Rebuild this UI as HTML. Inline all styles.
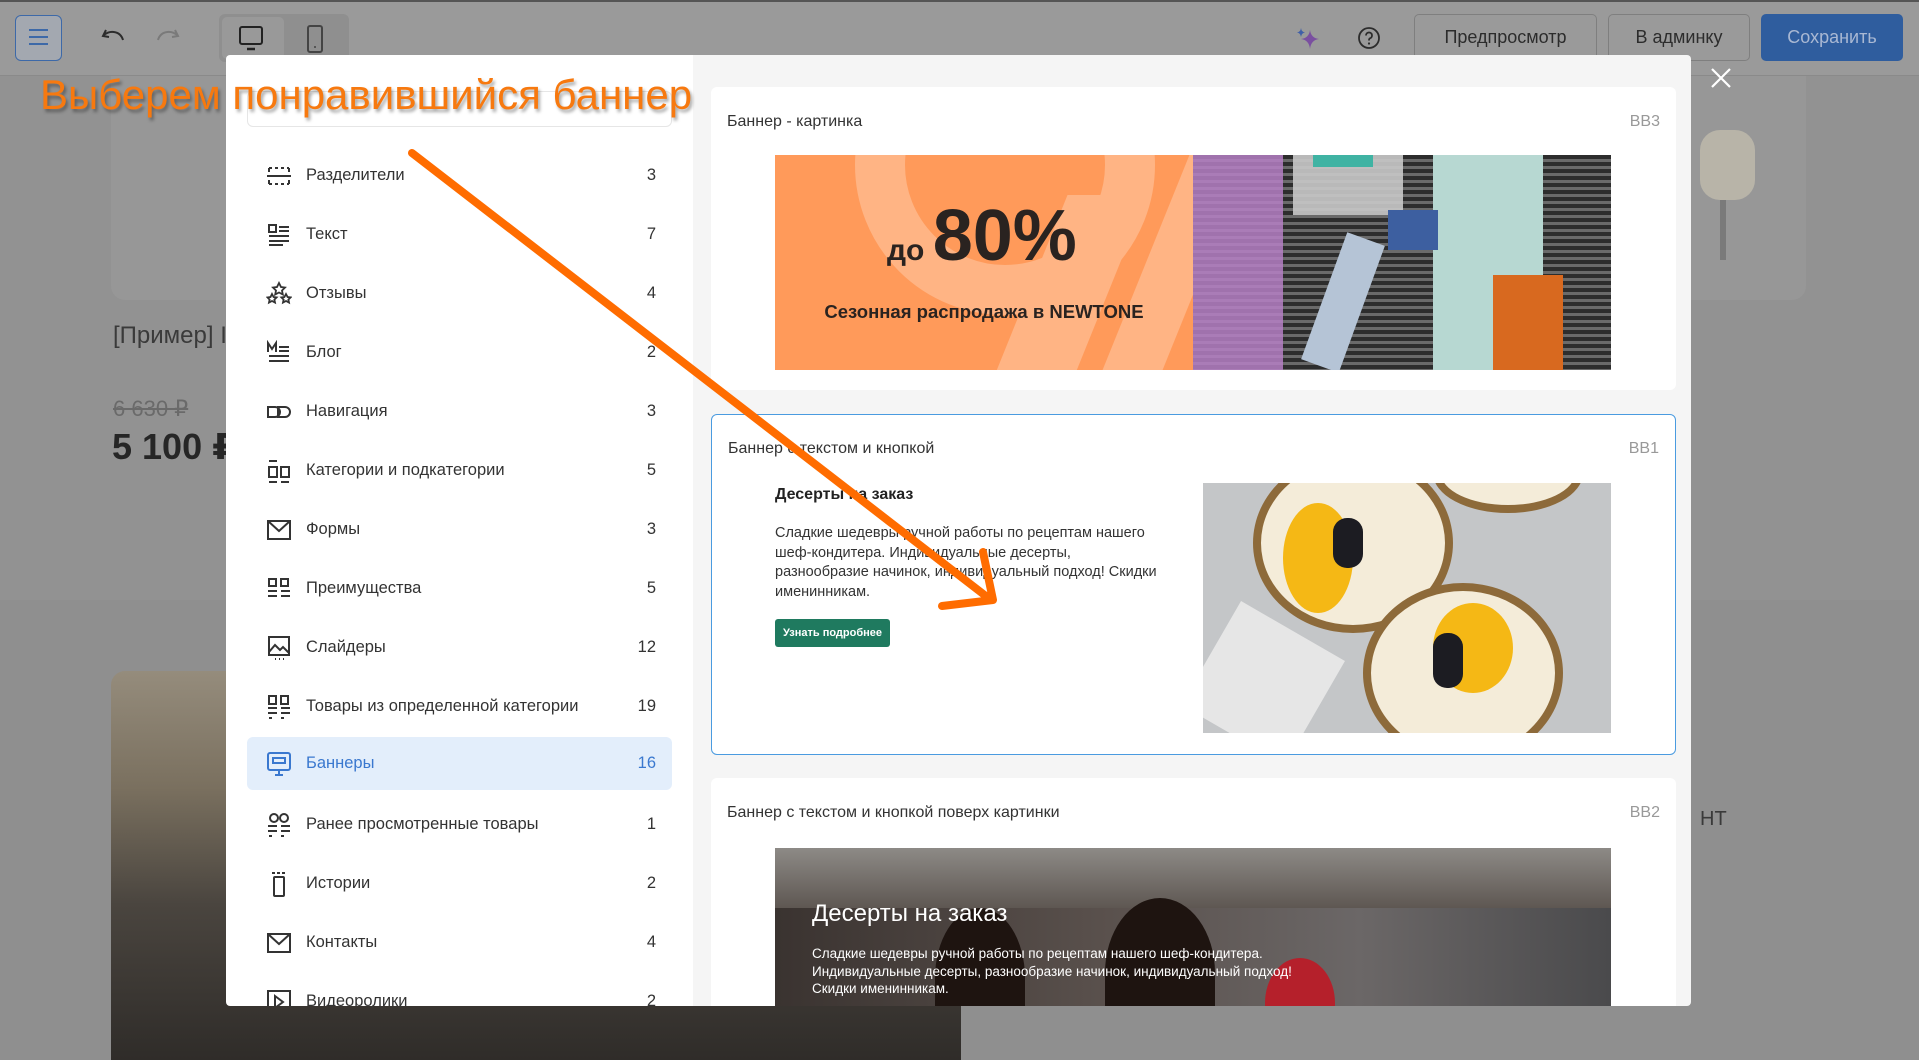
<!DOCTYPE html>
<html><head><meta charset="utf-8"><style>
*{margin:0;padding:0;box-sizing:border-box}
body{width:1919px;height:1060px;overflow:hidden;background:#929292;font-family:"Liberation Sans","DejaVu Sans",sans-serif;position:relative}
.a{position:absolute}
.tb{left:0;top:0;width:1919px;height:76px;background:#9a9a9a;border-top:2px solid #555;border-bottom:1px solid #8a8a8a}
.btn{border:1px solid #7f7f7f;border-radius:5px;color:#2c2c2c;font-size:18px;display:flex;align-items:center;justify-content:center}
.side{left:226px;top:55px;width:467px;height:951px;background:#fff;overflow:hidden;border-radius:4px 0 0 4px}
.right{left:693px;top:55px;width:998px;height:951px;background:#f5f5f5;overflow:hidden;border-radius:0 4px 4px 0}
.it{position:absolute;left:21px;width:425px;height:53px;display:flex;align-items:center;font-size:16.5px;color:#333;border-radius:6px}
.it svg{position:absolute;left:19px;width:26px;height:26px}
.it .t{position:absolute;left:59px}
.it .n{position:absolute;right:16px}
.card{position:absolute;left:18px;width:965px;background:#fff;border-radius:6px}
.ct{position:absolute;left:16px;top:26px;font-size:16px;color:#333}
.cc{position:absolute;right:16px;top:26px;font-size:16px;color:#999}
</style></head><body>
<div class="a" style="left:111px;top:76px;width:1695px;height:224px;background:#979797;border-radius:0 0 14px 14px"></div>
<div class="a" style="left:1690px;top:110px;width:80px;height:170px">
<div class="a" style="left:10px;top:20px;width:55px;height:70px;background:#b8b4a8;border-radius:20px"></div>
<div class="a" style="left:30px;top:90px;width:6px;height:60px;background:#7a7a7a"></div>
</div>
<div class="a" style="left:113px;top:322px;font-size:24px;color:#3a3a3a">[Пример] I</div>
<div class="a" style="left:113px;top:396px;font-size:22px;color:#6a6a6a;text-decoration:line-through">6 630 ₽</div>
<div class="a" style="left:112px;top:426px;font-size:36px;font-weight:bold;color:#262626">5 100 ₽</div>
<div class="a" style="left:0;top:600px;width:1919px;height:460px;background:#8f8f8f"></div>
<div class="a" style="left:111px;top:671px;width:850px;height:389px;border-radius:14px 0 0 0;background:linear-gradient(180deg,#958c7c 0%,#7a705f 30%,#4a453f 60%,#2f2c29 100%)"></div>
<div class="a" style="left:1700px;top:808px;font-size:20px;color:#3a3a3a">НТ</div>

<div class="a tb"></div>
<div class="a" style="left:15px;top:15px;width:47px;height:46px;border:1.5px solid #3d69a8;border-radius:6px;background:#a3a8b0"></div>
<div class="a" style="left:29px;top:29px;width:19px;height:2px;background:#3d69a8;box-shadow:0 7px 0 #3d69a8,0 14px 0 #3d69a8"></div>
<svg class="a" style="left:100px;top:26px" width="28" height="24" viewBox="0 0 28 24"><path d="M6 4 L3 10 L9 11 M3 10 C8 4 20 4 23 14" fill="none" stroke="#2c2c2c" stroke-width="2"/></svg>
<svg class="a" style="left:153px;top:26px" width="28" height="24" viewBox="0 0 28 24"><path d="M22 4 L25 10 L19 11 M25 10 C20 4 8 4 5 14" fill="none" stroke="#7a7a7a" stroke-width="2"/></svg>
<div class="a" style="left:219px;top:14px;width:130px;height:48px;background:#8f8f8f;border-radius:6px"></div>
<div class="a" style="left:222px;top:17px;width:62px;height:42px;background:#999;border-radius:5px"></div>
<svg class="a" style="left:238px;top:25px" width="26" height="26" viewBox="0 0 26 26"><rect x="2" y="2" width="22" height="17" rx="2" fill="none" stroke="#222" stroke-width="2"/><path d="M9 24h8" stroke="#222" stroke-width="2.5"/></svg>
<svg class="a" style="left:305px;top:24px" width="20" height="30" viewBox="0 0 20 30"><rect x="3" y="2" width="14" height="26" rx="2" fill="none" stroke="#444" stroke-width="2"/><circle cx="10" cy="23" r="1" fill="#444"/></svg>
<svg class="a" style="left:1294px;top:24px" width="28" height="28" viewBox="0 0 28 28"><path d="M16 6 Q17 14 25 15 Q17 16 16 25 Q15 16 7 15 Q15 14 16 6Z" fill="#7a4fa0"/><path d="M7 4 Q7.5 8 11 8.5 Q7.5 9 7 13 Q6.5 9 3 8.5 Q6.5 8 7 4Z" fill="#3f5fa8"/></svg>
<svg class="a" style="left:1357px;top:26px" width="24" height="24" viewBox="0 0 24 24"><circle cx="12" cy="12" r="10" fill="none" stroke="#2c2c2c" stroke-width="1.8"/><path d="M9 9.5a3 3 0 1 1 4 2.8c-1 .4-1 1-1 2.2" fill="none" stroke="#2c2c2c" stroke-width="1.8"/><circle cx="12" cy="17.5" r="1.1" fill="#2c2c2c"/></svg>
<div class="a btn" style="left:1414px;top:14px;width:183px;height:47px">Предпросмотр</div>
<div class="a btn" style="left:1608px;top:14px;width:142px;height:47px">В админку</div>
<div class="a btn" style="left:1761px;top:14px;width:142px;height:47px;background:#2f5d9e;border-color:#2f5d9e;color:#a9b8d3">Сохранить</div>

<svg class="a" style="left:1710px;top:67px" width="22" height="22" viewBox="0 0 22 22"><path d="M2 2L20 20M20 2L2 20" stroke="#fff" stroke-width="2.2"/></svg>

<div class="a side">
<div class="a" style="left:21px;top:36px;width:425px;height:36px;border:1px solid #e6e6e6;border-radius:6px"></div>
<div class="it" style="top:94px"><svg viewBox="0 0 26 26" fill="none" stroke="#333" stroke-width="2"><path d="M3 5h3M9 5h3M15 5h3M21 5h2M3 21h3M9 21h3M15 21h3M21 21h2M3 5v4M23 5v4M3 17v4M23 17v4M1 13h24"/></svg><span class="t">Разделители</span><span class="n">3</span></div>
<div class="it" style="top:153px"><svg viewBox="0 0 26 26" fill="none" stroke="#333" stroke-width="2"><rect x="3" y="3" width="7" height="7"/><path d="M13 5h10M13 9h10M3 14h20M3 19h20M3 23h14"/></svg><span class="t">Текст</span><span class="n">7</span></div>
<div class="it" style="top:212px"><svg viewBox="0 0 26 26" fill="none" stroke="#333" stroke-width="1.8"><path d="M13 2l2 4 4 .5-3 3 .8 4-3.8-2-3.8 2 .8-4-3-3 4-.5z"/><path d="M6 13l1.6 3 3 .4-2.2 2.2.6 3-3-1.6-3 1.6.6-3L1.5 16.4l3-.4z"/><path d="M20 13l1.6 3 3 .4-2.2 2.2.6 3-3-1.6-3 1.6.6-3-2.2-2.2 3-.4z"/></svg><span class="t">Отзывы</span><span class="n">4</span></div>
<div class="it" style="top:271px"><svg viewBox="0 0 26 26" fill="none" stroke="#333" stroke-width="2"><path d="M2 12V3l4 6 4-6v9M13 7h10M13 11h10M3 16h20M3 21h20"/></svg><span class="t">Блог</span><span class="n">2</span></div>
<div class="it" style="top:330px"><svg viewBox="0 0 26 26" fill="none" stroke="#333" stroke-width="2"><path d="M2 8h7a5 5 0 0 1 0 10H2zM12 8h7a5 5 0 0 1 0 10h-7z"/></svg><span class="t">Навигация</span><span class="n">3</span></div>
<div class="it" style="top:389px"><svg viewBox="0 0 26 26" fill="none" stroke="#333" stroke-width="2"><path d="M3 3h8M3 24h8M15 24h8"/><rect x="3" y="9" width="8" height="10"/><rect x="15" y="9" width="8" height="10"/></svg><span class="t">Категории и подкатегории</span><span class="n">5</span></div>
<div class="it" style="top:448px"><svg viewBox="0 0 26 26" fill="none" stroke="#333" stroke-width="2"><rect x="2" y="4" width="22" height="18"/><path d="M2 4l11 10 11-10"/></svg><span class="t">Формы</span><span class="n">3</span></div>
<div class="it" style="top:507px"><svg viewBox="0 0 26 26" fill="none" stroke="#333" stroke-width="2"><rect x="3" y="3" width="7" height="7"/><rect x="15" y="3" width="7" height="7"/><path d="M2 15h9M15 15h9M2 20h9M15 20h9"/></svg><span class="t">Преимущества</span><span class="n">5</span></div>
<div class="it" style="top:566px"><svg viewBox="0 0 26 26" fill="none" stroke="#333" stroke-width="2"><rect x="3" y="2" width="20" height="18"/><path d="M3 17l6-7 5 5 3-3 6 6M9 24h1M13 24h1M17 24h1"/></svg><span class="t">Слайдеры</span><span class="n">12</span></div>
<div class="it" style="top:625px"><svg viewBox="0 0 26 26" fill="none" stroke="#333" stroke-width="2"><rect x="3" y="2" width="7" height="8"/><rect x="15" y="2" width="7" height="8"/><path d="M2 14h9M15 14h9M2 19h9M15 19h9M3 24h3M15 24h3"/></svg><span class="t">Товары из определенной категории</span><span class="n">19</span></div>
<div class="it" style="top:682px;background:#e3eefb;color:#3a78cf"><svg viewBox="0 0 26 26" fill="none" stroke="#3a78cf" stroke-width="2"><rect x="2" y="2" width="22" height="17" rx="2"/><rect x="7" y="7" width="12" height="5"/><path d="M13 19v5M9 24h8"/></svg><span class="t">Баннеры</span><span class="n">16</span></div>
<div class="it" style="top:743px"><svg viewBox="0 0 26 26" fill="none" stroke="#333" stroke-width="2"><circle cx="8" cy="6" r="4"/><circle cx="18" cy="6" r="4"/><path d="M2 14h9M15 14h9M2 19h9M15 19h9M3 24h3M15 24h3"/></svg><span class="t">Ранее просмотренные товары</span><span class="n">1</span></div>
<div class="it" style="top:802px"><svg viewBox="0 0 26 26" fill="none" stroke="#333" stroke-width="2"><path d="M6 2h3M11 2h3M16 2h3"/><rect x="8" y="6" width="10" height="19" rx="1"/></svg><span class="t">Истории</span><span class="n">2</span></div>
<div class="it" style="top:861px"><svg viewBox="0 0 26 26" fill="none" stroke="#333" stroke-width="2"><rect x="2" y="4" width="22" height="18"/><path d="M2 4l11 10 11-10"/></svg><span class="t">Контакты</span><span class="n">4</span></div>
<div class="it" style="top:920px"><svg viewBox="0 0 26 26" fill="none" stroke="#333" stroke-width="2"><rect x="2" y="2" width="22" height="22"/><path d="M9 7l8 6-8 6z"/></svg><span class="t">Видеоролики</span><span class="n">2</span></div>
</div>

<div class="a right">
<div class="card" style="top:32px;height:303px">
<div class="ct">Баннер - картинка</div><div class="cc">BB3</div>
<div class="a" style="left:64px;top:68px;width:418px;height:215px;background:#ff9a5a;overflow:hidden">
<div class="a" style="left:80px;top:-140px;width:300px;height:300px;border-radius:50%;border:50px solid #ffb484"></div>
<div class="a" style="left:240px;top:40px;width:80px;height:260px;background:#ffb484;transform:skewX(-22deg)"></div>
<div class="a" style="left:370px;top:-20px;width:60px;height:260px;background:#ffb484;transform:skewX(-22deg)"></div>
<div class="a" style="left:112px;top:40px;font-size:72px;font-weight:bold;color:#2a2320;white-space:nowrap"><span style="font-size:30px">до </span>80%</div>
<div class="a" style="left:0;width:418px;top:146px;text-align:center;font-size:18.5px;font-weight:bold;color:#2a2320">Сезонная распродажа в NEWTONE</div>
</div>
<div class="a" style="left:482px;top:68px;width:418px;height:215px;overflow:hidden;background:repeating-linear-gradient(180deg,#2d2d2d 0 4px,#6a6a6a 4px 7px)">
<div class="a" style="left:0;top:0;width:90px;height:215px;background:#b57fc4;opacity:.85"></div>
<div class="a" style="left:100px;top:0;width:110px;height:60px;background:#c9c9c9;opacity:.9"></div>
<div class="a" style="left:240px;top:0;width:110px;height:215px;background:#b7d8d2"></div>
<div class="a" style="left:300px;top:120px;width:70px;height:95px;background:#d8691f"></div>
<div class="a" style="left:120px;top:0;width:60px;height:12px;background:#3fb3a3"></div>
<div class="a" style="left:130px;top:80px;width:40px;height:135px;background:#b5c4d6;transform:rotate(20deg)"></div>
<div class="a" style="left:195px;top:55px;width:50px;height:40px;background:#3d5fa0"></div>
</div>
</div>
<div class="card" style="top:359px;height:341px;border:1px solid #4a9be0">
<div class="ct" style="top:25px">Баннер с текстом и кнопкой</div><div class="cc" style="top:25px">BB1</div>
<div class="a" style="left:63px;top:71px;font-size:16px;font-weight:bold;color:#222">Десерты на заказ</div>
<div class="a" style="left:63px;top:109px;width:388px;font-size:14.5px;line-height:19.5px;color:#333">Сладкие шедевры ручной работы по рецептам нашего шеф-кондитера. Индивидуальные десерты, разнообразие начинок, индивидуальный подход! Скидки именинникам.</div>
<div class="a" style="left:63px;top:204px;width:115px;height:28px;background:#1f7a5f;border-radius:3px;color:#fff;font-size:11px;font-weight:bold;display:flex;align-items:center;justify-content:center">Узнать подробнее</div>
<div class="a" style="left:491px;top:68px;width:408px;height:250px;background:#c4c6c8;overflow:hidden">
<div class="a" style="left:50px;top:-30px;width:200px;height:180px;border-radius:50%;background:#f4ecd9;border:8px solid #8d6a3a"></div>
<div class="a" style="left:80px;top:20px;width:70px;height:110px;border-radius:50%;background:#f5b815"></div>
<div class="a" style="left:230px;top:-50px;width:150px;height:80px;border-radius:50%;background:#f4ecd9;border:8px solid #8d6a3a"></div>
<div class="a" style="left:160px;top:100px;width:200px;height:180px;border-radius:50%;background:#f4ecd9;border:8px solid #8d6a3a"></div>
<div class="a" style="left:230px;top:120px;width:80px;height:90px;border-radius:50%;background:#f5b815"></div>
<div class="a" style="left:130px;top:35px;width:30px;height:50px;border-radius:14px;background:#1c1c22"></div>
<div class="a" style="left:230px;top:150px;width:30px;height:55px;border-radius:14px;background:#1c1c22"></div>
<div class="a" style="left:0;top:140px;width:120px;height:120px;background:#e6e6e6;transform:rotate(30deg)"></div>
</div>
</div>
<div class="card" style="top:723px;height:260px">
<div class="ct">Баннер с текстом и кнопкой поверх картинки</div><div class="cc">BB2</div>
<div class="a" style="left:64px;top:70px;width:836px;height:200px;overflow:hidden;background:linear-gradient(90deg,#3a3330 0%,#5a514d 40%,#6b6767 70%,#4a4a4c 100%)">
<div class="a" style="left:0;top:0;width:836px;height:60px;background:linear-gradient(180deg,#8d8a86,#5e5752)"></div>
<div class="a" style="left:330px;top:50px;width:110px;height:150px;border-radius:50% 50% 10% 10%;background:#1e1410"></div>
<div class="a" style="left:160px;top:60px;width:90px;height:140px;border-radius:50% 50% 10% 10%;background:#1e1410"></div>
<div class="a" style="left:490px;top:110px;width:70px;height:90px;border-radius:50%;background:#b5202b"></div>
<div class="a" style="left:37px;top:52px;font-size:24px;color:#fff">Десерты на заказ</div>
<div class="a" style="left:37px;top:97px;width:520px;font-size:13.5px;line-height:17.5px;color:#fff">Сладкие шедевры ручной работы по рецептам нашего шеф-кондитера. Индивидуальные десерты, разнообразие начинок, индивидуальный подход! Скидки именинникам.</div>
</div>
</div>
</div>

<div class="a" style="left:40px;top:71px;font-size:42px;color:#f7790f;white-space:nowrap;text-shadow:2px 3px 3px rgba(0,0,0,.35)">Выберем понравившийся баннер</div>
<svg class="a" style="left:0;top:0" width="1919" height="1060"><path d="M412 153 L991 600 M983 552 L993 600 L942 606" fill="none" stroke="#ff6c00" stroke-width="8" stroke-linecap="round" stroke-linejoin="round"/></svg>
</body></html>
